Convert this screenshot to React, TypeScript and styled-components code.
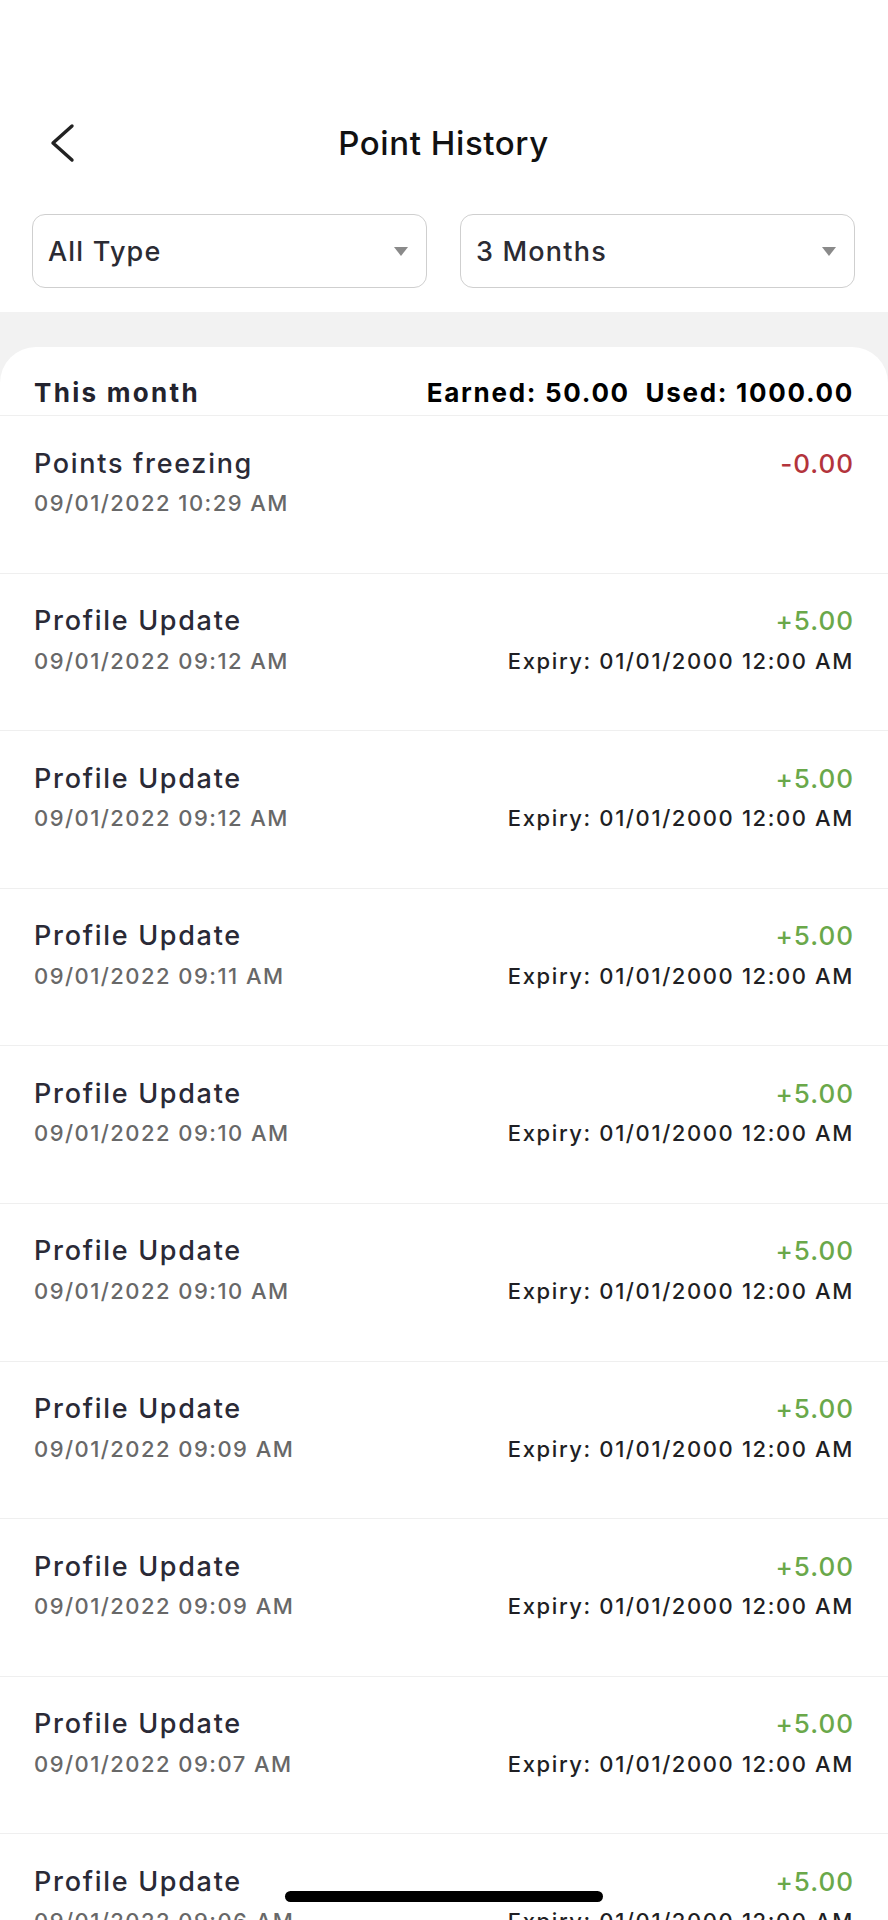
import React from "react";
import styled, { createGlobalStyle } from "styled-components";

const Global = createGlobalStyle`
  html, body { margin: 0; padding: 0; background: #ffffff; }
  body { font-family: Inter, "Open Sans", "Liberation Sans", sans-serif; overflow: hidden; }
  * { box-sizing: border-box; }
`;

const Page = styled.div`
  width: 888px;
  height: 1920px;
  overflow: hidden;
  position: relative;
  background: #f2f2f2;
  display: flex;
  flex-direction: column;
`;

const Top = styled.div`
  background: #ffffff;
  padding: 100px 33px 24px 32px;
  display: flex;
  flex-direction: column;
  gap: 28px;
`;

const Header = styled.div`
  height: 86px;
  display: grid;
  grid-template-columns: 60px 1fr 60px;
  align-items: center;
`;

const BackButton = styled.button`
  border: none;
  background: transparent;
  padding: 0 0 0 16px;
  display: flex;
  align-items: center;
  height: 40px;
  cursor: pointer;
`;

const Title = styled.h1`
  margin: 0;
  text-align: center;
  font-size: 33px;
  font-weight: 500;
  color: #111111;
  letter-spacing: 0.6px;
`;

const Filters = styled.div`
  display: grid;
  grid-template-columns: 1fr 1fr;
  gap: 33px;
`;

const Select = styled.div`
  height: 74px;
  border: 1.5px solid #cfcfcf;
  border-radius: 13px;
  display: flex;
  align-items: center;
  justify-content: space-between;
  padding: 0 18px 0 15px;
  font-size: 27px;
  font-weight: 500;
  letter-spacing: 1.2px;
  color: #2b2b33;
`;

const Caret = styled.span`
  width: 0;
  height: 0;
  border-left: 7px solid transparent;
  border-right: 7px solid transparent;
  border-top: 9px solid #8a8a8a;
`;

const Band = styled.div`
  padding-top: 35px;
  flex: 1;
  display: flex;
`;

const Card = styled.div`
  flex: 1;
  background: #ffffff;
  border-radius: 36px 36px 0 0;
`;

const CardHeader = styled.div`
  height: 69px;
  padding: 31px 34px 0 34px;
  display: flex;
  justify-content: space-between;
  align-items: flex-start;
  border-bottom: 1.5px solid #efefef;
  font-weight: 700;
  font-size: 26px;
  line-height: 30px;
`;

const Month = styled.span`
  color: #23232e;
  letter-spacing: 2.3px;
`;

const Totals = styled.span`
  color: #000000;
  letter-spacing: 1.7px;
`;

const Row = styled.div`
  height: 157.6px;
  padding: 32px 34px 0 34px;
  border-bottom: 1.5px solid #efefef;
  display: grid;
  grid-template-columns: 1fr auto;
  grid-template-rows: 30px 30px;
  row-gap: 10px;
  align-items: center;
`;

const ItemTitle = styled.div`
  font-size: 27px;
  font-weight: 500;
  letter-spacing: 1.7px;
  color: #2a2a36;
`;

const ItemDate = styled.div`
  font-size: 22px;
  font-weight: 500;
  letter-spacing: 1.45px;
  color: #686868;
`;

const Amount = styled.div<{ $negative?: boolean }>`
  text-align: right;
  font-size: 26px;
  font-weight: 500;
  letter-spacing: 1px;
  color: ${(p) => (p.$negative ? "#b3343c" : "#6aa84a")};
`;

const Expiry = styled.div`
  text-align: right;
  font-size: 22px;
  font-weight: 500;
  letter-spacing: 1.6px;
  color: #1f1f24;
`;

const HomeIndicator = styled.div`
  position: absolute;
  left: 285px;
  width: 318px;
  bottom: 18px;
  height: 11px;
  border-radius: 6px;
  background: #000000;
`;

type Item = { title: string; date: string; amount: string; negative?: boolean; expiry?: string };

const items: Item[] = [
  { title: "Points freezing", date: "09/01/2022 10:29 AM", amount: "-0.00", negative: true },
  { title: "Profile Update", date: "09/01/2022 09:12 AM", amount: "+5.00", expiry: "Expiry: 01/01/2000 12:00 AM" },
  { title: "Profile Update", date: "09/01/2022 09:12 AM", amount: "+5.00", expiry: "Expiry: 01/01/2000 12:00 AM" },
  { title: "Profile Update", date: "09/01/2022 09:11 AM", amount: "+5.00", expiry: "Expiry: 01/01/2000 12:00 AM" },
  { title: "Profile Update", date: "09/01/2022 09:10 AM", amount: "+5.00", expiry: "Expiry: 01/01/2000 12:00 AM" },
  { title: "Profile Update", date: "09/01/2022 09:10 AM", amount: "+5.00", expiry: "Expiry: 01/01/2000 12:00 AM" },
  { title: "Profile Update", date: "09/01/2022 09:09 AM", amount: "+5.00", expiry: "Expiry: 01/01/2000 12:00 AM" },
  { title: "Profile Update", date: "09/01/2022 09:09 AM", amount: "+5.00", expiry: "Expiry: 01/01/2000 12:00 AM" },
  { title: "Profile Update", date: "09/01/2022 09:07 AM", amount: "+5.00", expiry: "Expiry: 01/01/2000 12:00 AM" },
  { title: "Profile Update", date: "09/01/2022 09:06 AM", amount: "+5.00", expiry: "Expiry: 01/01/2000 12:00 AM" },
];

export default function App() {
  return (
    <>
      <Global />
      <Page>
        <Top>
          <Header>
            <BackButton aria-label="Back">
              <svg width="28" height="40" viewBox="0 0 28 40" fill="none">
                <path d="M24 3 L5 20 L24 37" stroke="#222" strokeWidth="3.4" strokeLinecap="round" strokeLinejoin="round" />
              </svg>
            </BackButton>
            <Title>Point History</Title>
            <span />
          </Header>
          <Filters>
            <Select>
              All Type
              <Caret />
            </Select>
            <Select>
              3 Months
              <Caret />
            </Select>
          </Filters>
        </Top>
        <Band>
          <Card>
            <CardHeader>
              <Month>This month</Month>
              <Totals>Earned: 50.00&nbsp; Used: 1000.00</Totals>
            </CardHeader>
            {items.map((it, i) => (
              <Row key={i}>
                <ItemTitle>{it.title}</ItemTitle>
                <Amount $negative={it.negative}>{it.amount}</Amount>
                <ItemDate>{it.date}</ItemDate>
                <Expiry>{it.expiry ?? ""}</Expiry>
              </Row>
            ))}
          </Card>
        </Band>
        <HomeIndicator />
      </Page>
    </>
  );
}
